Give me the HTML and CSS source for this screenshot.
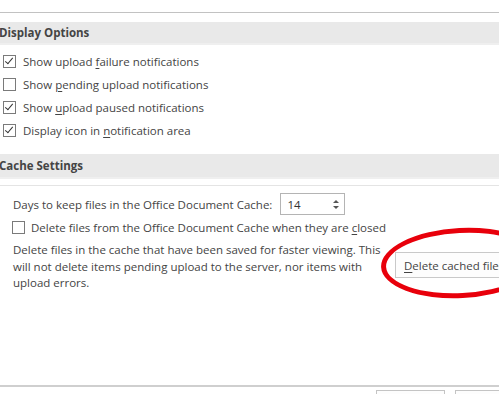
FILE: index.html
```html
<!DOCTYPE html>
<html lang="en">
<head>
    <meta charset="UTF-8">
    <title>Upload Center Settings</title>
    <link rel="stylesheet" href="styles.css">
</head>
<body>
    <div class="dialog">
        <div class="top-rule"></div>

        <div class="group-head">Display Options</div>
        <ul class="options">
            <li><span class="check on"></span><span>Show upload <u>f</u>ailure notifications</span></li>
            <li><span class="check"></span><span>Show <u>p</u>ending upload notifications</span></li>
            <li><span class="check on"></span><span>Show <u>u</u>pload paused notifications</span></li>
            <li><span class="check on"></span><span>Display icon in <u>n</u>otification area</span></li>
        </ul>

        <div class="group-head cache">Cache Settings</div>
        <div class="group-rule"></div>

        <div class="cache-body">
            <div class="days-row">
                <span>Days to keep files in the Office Document Cache:</span>
                <div class="spin">
                    <span class="spin-value">14</span>
                    <span class="spin-arrows"><i class="up"></i><i class="down"></i></span>
                </div>
            </div>
            <div class="close-row"><span class="check"></span><span>Delete files from the Office Document Cache when they are <u>c</u>losed</span></div>
            <div class="delete-row">
                <p>Delete files in the cache that have been saved for faster viewing. This will not delete items pending upload to the server, nor items with upload errors.</p>
                <button class="btn"><u>D</u>elete cached files</button>
                <div class="mark"></div>
            </div>
        </div>

        <div class="footer">
            <button class="btn small"></button>
            <button class="btn small"></button>
        </div>
    </div>
</body>
</html>
```

FILE: styles.css
```css
body {
    margin: 0;
    background: #fff;
    font-family: "Open Sans", "Noto Sans", Arial, sans-serif;
    font-size: 11.5px;
    color: #444;
    overflow: hidden;
}
.dialog {
    width: 499px;
    height: 394px;
    overflow: hidden;
    position: relative;
}
.top-rule {
    height: 12px;
    border-bottom: 1px solid #c2c2c2;
}
.group-head {
    margin-top: 9px;
    height: 21px;
    line-height: 21px;
    background: #e9e9e9;
    border-bottom: 2px solid #efefef;
    font-weight: 700;
    font-size: 11.5px;
    color: #444;
    margin-left: -1px;
}
.group-head.cache {
    margin-top: 12px;
    height: 23px;
    line-height: 23px;
}
.group-rule {
    margin: 6px 0 0 0;
    border-top: 1px solid #e4e4e4;
}
.options {
    list-style: none;
    margin: 5px 0 0 0;
    padding: 0;
}
.options li {
    height: 23px;
    display: flex;
    align-items: center;
    padding-left: 3px;
}
.check {
    width: 11px;
    height: 11px;
    border: 1px solid #7a7a7a;
    background: #fff;
    margin-right: 7px;
    flex: none;
    position: relative;
}
.check.on::after {
    content: "";
    position: absolute;
    left: 3px;
    top: 0px;
    width: 3px;
    height: 7px;
    border: solid #333;
    border-width: 0 1.3px 1.3px 0;
    transform: rotate(40deg);
}
u {
    text-decoration: underline;
    text-underline-offset: 2px;
}
.cache-body {
    padding-left: 13px;
}
.days-row {
    margin-top: 7px;
    display: flex;
    align-items: center;
    height: 22px;
}
.spin {
    margin-left: 8px;
    border: 1px solid #b4b4b4;
    display: flex;
    align-items: center;
    justify-content: space-between;
    padding: 0 5px 0 6px;
    box-sizing: border-box;
    width: 65px;
    height: 22px;
    color: #333;
}
.spin-arrows {
    display: flex;
    flex-direction: column;
    gap: 3px;
}
.spin-arrows i {
    width: 0;
    height: 0;
    border-left: 3px solid transparent;
    border-right: 3px solid transparent;
}
.spin-arrows .up {
    border-bottom: 3px solid #555;
}
.spin-arrows .down {
    border-top: 3px solid #555;
}
.close-row {
    margin-top: 1px;
    height: 22px;
    display: flex;
    align-items: center;
    margin-left: -1px;
}
.close-row .check {
    margin-right: 6px;
}
.delete-row {
    display: flex;
    align-items: flex-start;
    position: relative;
}
.delete-row p {
    margin: 4px 0 0 0;
    width: 370px;
    line-height: 16.5px;
    flex: none;
}
.btn {
    font: inherit;
    color: #444;
    background: #fdfdfd;
    border: 1px solid #c9c9c9;
    height: 26px;
    padding: 0 8px;
    margin: 14px 0 0 12px;
    flex: none;
    width: 130px;
    text-align: left;
}
.mark {
    position: absolute;
    left: 368px;
    top: -10px;
    width: 150px;
    height: 60px;
    border: 5px solid #e8000b;
    border-radius: 50%;
    transform: rotate(-3deg);
}
.footer {
    position: absolute;
    left: 0;
    right: 0;
    top: 385px;
    border-top: 2px solid #cfcfcf;
    display: flex;
    padding-left: 376px;
    gap: 10px;
}
.btn.small {
    margin: 3px 0 0 0;
    width: 69px;
    height: 20px;
    border-color: #c4c4c4;
}
.btn.small + .btn.small {
    width: 60px;
}
```
